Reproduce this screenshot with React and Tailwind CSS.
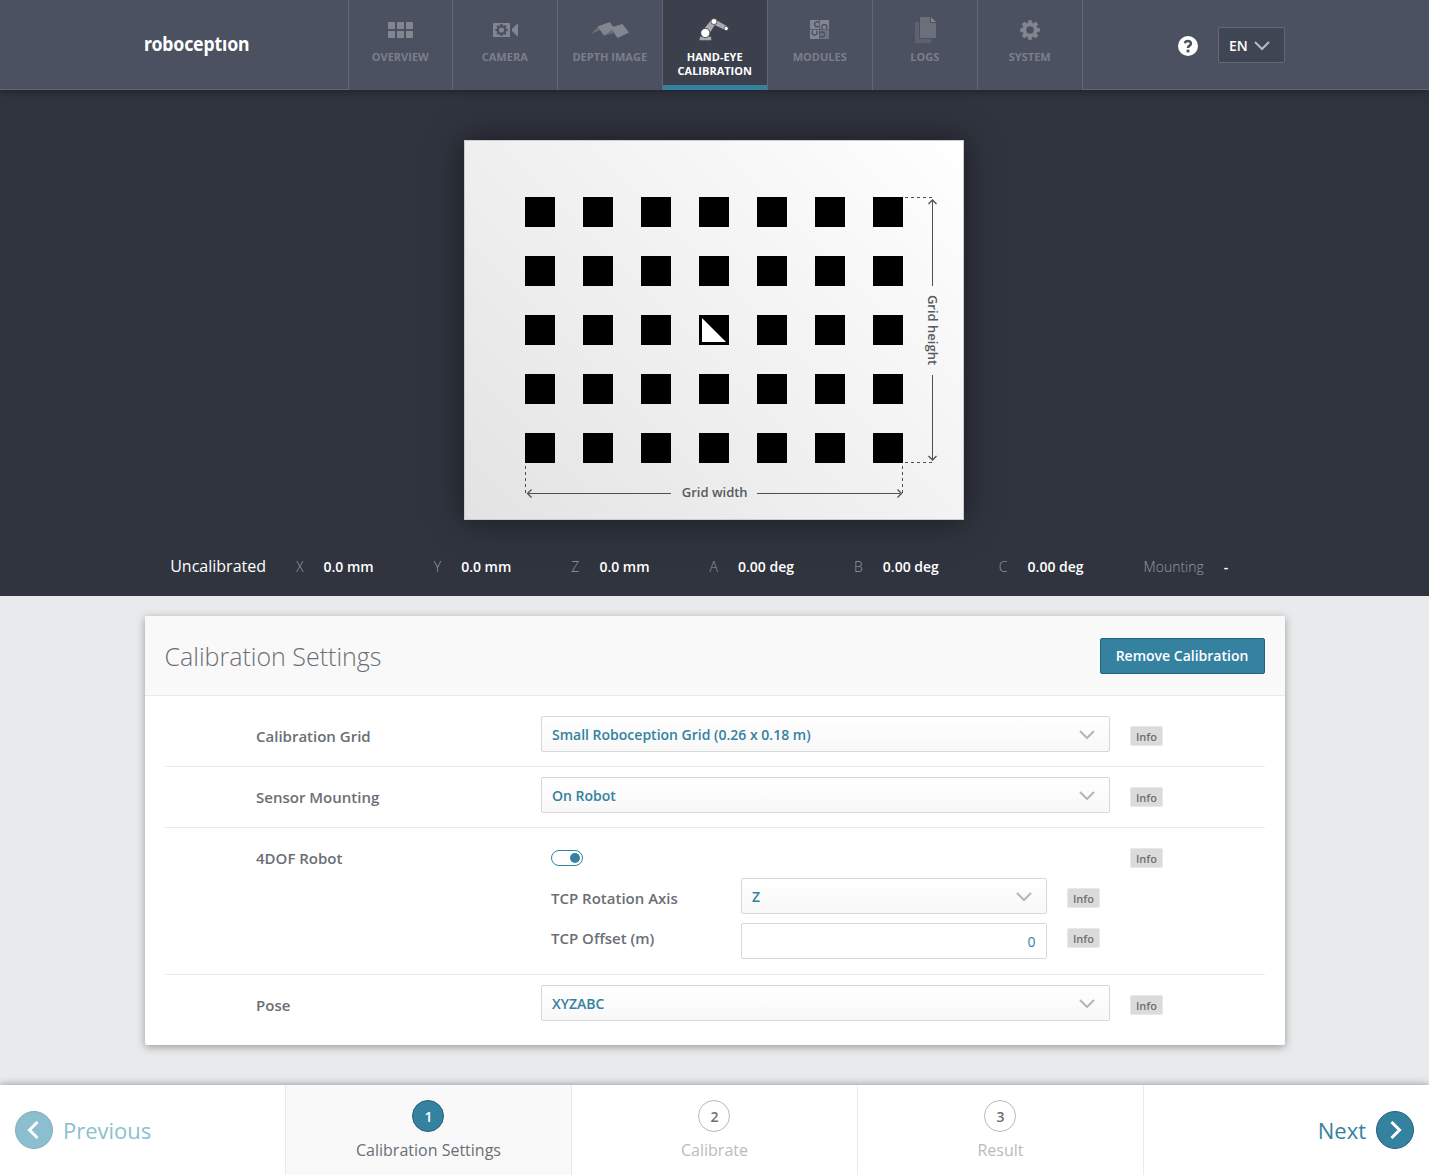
import React from "react";

const GEAR =
  "M8.3 0h3.4l.5 2.6 1.5.6L15.9 1.7l2.4 2.4-1.5 2.2.6 1.5 2.6.5v3.4l-2.6.5-.6 1.5 1.5 2.2-2.4 2.4-2.2-1.5-1.5.6-.5 2.6H8.3l-.5-2.6-1.5-.6-2.2 1.5-2.4-2.4 1.5-2.2-.6-1.5L0 11.7V8.3l2.6-.5.6-1.5L1.7 4.1l2.4-2.4 2.2 1.5 1.5-.6zM10 5.8a4.2 4.2 0 1 0 0 8.4 4.2 4.2 0 0 0 0-8.4z";

const OverviewIcon = () => (
  <svg width="25" height="16" viewBox="0 0 25 16" fill="#828690">
    {[0, 9, 18].map((x) =>
      [0, 9].map((y) => <rect key={`${x}-${y}`} x={x} y={y} width="7" height="7" rx="0.6" />)
    )}
  </svg>
);

const CameraIcon = () => (
  <svg width="25" height="14" viewBox="0 0 25 14" className="ml-px">
    <rect width="17" height="14" rx="0.6" fill="#828690" />
    <path d="M19 6 24 1q1-.6 1 .4v11.2q0 1-1 .4l-5-5z" fill="#828690" />
    <g transform="translate(2.4 0.9) scale(0.61)">
      <path d={GEAR} fill="#4b5160" />
    </g>
  </svg>
);

const DepthIcon = () => (
  <svg width="39" height="17" viewBox="0 0 39 17" className="mt-px ml-px">
    <path d="M0.300 12 7 4.600 9 8z" fill="#6b6f7b" />
    <path d="M13 13.400 20.500 5 23 11z" fill="#6b6f7b" />
    <path d="M6.500 4.500 18.800 0 23 6 13 13.600z" fill="#828690" />
    <path d="M19.600 5.400 31.500 2 38 10.600 26.500 16z" fill="#828690" />
  </svg>
);

const RobotIcon = () => (
  <svg width="30" height="23" viewBox="0 0 30 23" className="mr-0.5 mb-px">
    <path d="M1 18.700h11.200v3.500H.4z" fill="#a9abae" />
    <path d="M4.500 11.500 12 2.200l4.600 3.600-6.400 10z" fill="#a9abae" />
    <path d="M16 1.200 28 8.200l-1.800 3.800L14.600 6.600z" fill="#a9abae" />
    <circle cx="6.300" cy="15" r="4.600" fill="#fff" stroke="#3b404c" strokeWidth="0.900" />
    <circle cx="15" cy="3.500" r="3" fill="#fff" stroke="#3b404c" strokeWidth="0.800" />
    <circle cx="27.200" cy="10.500" r="2.100" fill="#fff" stroke="#3b404c" strokeWidth="0.700" />
  </svg>
);

const ModulesIcon = () => (
  <svg width="19" height="19" viewBox="0 0 19 19" className="mr-px mb-px">
    <path d="M.5 0H9v9.300H0V.5zM9.700 0h8.800l.5.500v8.800H9.700zM0 10h9v9H.5l-.5-.5z" fill="#828690" />
    <path d="M9.700 10H19v8.500l-.5.500H9.700z" fill="#6f7380" />
    <g fill="none" stroke="#4b5160" strokeWidth="1.500">
      <path d="M9 2.700A2.500 2.500 0 1 0 9 6" />
      <path d="M12.700 8.800a2.500 2.500 0 1 1 3.300 0" />
      <path d="M3 10.700a2.500 2.500 0 1 0 3.300 0" />
      <path d="M10.200 12.900a2.500 2.500 0 1 1 0 3.200" />
    </g>
  </svg>
);

const LogsIcon = () => (
  <svg width="21" height="26" viewBox="0 0 21 26" className="ml-px">
    <path d="M0 5h4v17h12v4H0z" fill="#5d626e" />
    <path d="M5 0h10v6h6v15H5z" fill="#6b6f79" />
    <path d="M16 0l5 5h-5z" fill="#828690" />
  </svg>
);

const SystemIcon = () => (
  <svg width="20" height="20" viewBox="0 0 20 20">
    <path
      fill="#828690"
      stroke="#828690"
      strokeWidth="0.4"
      fillRule="evenodd"
      d="M8.500.4Q10-.3 11.500.4l.4 2.500 1.500.6 2.100-1.500q1.700.8 2.500 2.500l-1.500 2.100.6 1.500 2.500.4q.7 1.500 0 3l-2.500.4-.6 1.500 1.500 2.100q-.8 1.700-2.500 2.500l-2.100-1.500-1.500.6-.4 2.500q-1.500.7-3 0l-.4-2.500-1.500-.6L4.500 18Q2.800 17.200 2 15.500l1.500-2.100-.6-1.500-2.500-.4q-.7-1.500 0-3l2.500-.4.6-1.500L2 4.500Q2.800 2.800 4.500 2l2.100 1.500 1.500-.6zM10 6a4 4 0 1 0 0 8 4 4 0 0 0 0-8z"
    />
  </svg>
);

const Chevron = ({ className }) => (
  <svg width="16" height="10" viewBox="0 0 16 10" className={className}>
    <path d="M1 1l7 7 7-7" fill="none" stroke="currentColor" strokeWidth="2" />
  </svg>
);

const NAV = [
  { label: ["OVERVIEW"], Icon: OverviewIcon, width: "w-[104px]" },
  { label: ["CAMERA"], Icon: CameraIcon, width: "w-[105px]" },
  { label: ["DEPTH IMAGE"], Icon: DepthIcon, width: "w-[105px]" },
  { label: ["HAND-EYE", "CALIBRATION"], Icon: RobotIcon, width: "w-[105px]", active: true },
  { label: ["MODULES"], Icon: ModulesIcon, width: "w-[105px]" },
  { label: ["LOGS"], Icon: LogsIcon, width: "w-[105px]" },
  { label: ["SYSTEM"], Icon: SystemIcon, width: "w-[105px]" },
];

function Header() {
  return (
    <header className="relative z-10 flex h-[90px] bg-[#4b5160] shadow-[0_0_10px_rgba(0,0,0,0.5)]">
      <div className="flex w-[348px] border-b border-[#62666f] pt-8 pl-[144px]">
        <span className="h-6 origin-left scale-x-[0.885] font-['Noto_Sans'] text-[20px] leading-6 font-bold tracking-[-0.2px] whitespace-nowrap text-white">
          roboceptıon
        </span>
      </div>
      <nav className="flex">
        {NAV.map(({ label, Icon, width, active }) => (
          <a
            key={label[0]}
            className={`${width} flex flex-col items-center border-l border-[#62666f] ${
              active ? "bg-[#3b404c] text-white shadow-[inset_0_-5px_0_#3581a0]" : "text-[#7b7f8a]"
            }`}
          >
            <span className="mt-[15px] flex h-[30px] items-center justify-center">
              <Icon />
            </span>
            <span className="mt-[5px] pr-[0.5px] text-center text-[11px] leading-[14px] font-bold">
              {label.map((line) => (
                <span key={line} className="block whitespace-nowrap">
                  {line}
                </span>
              ))}
            </span>
          </a>
        ))}
      </nav>
      <div className="flex flex-1 border-b border-l border-[#62666f]">
        <svg width="20" height="20" viewBox="0 0 20 20" className="mt-9 ml-[95px]">
          <circle cx="10" cy="10" r="10" fill="#fff" />
          <path
            d="M6.900 7.200Q7.400 4.900 10 4.900T12.900 7.500Q12.900 9 11.300 9.900 10 10.600 10 12"
            fill="none"
            stroke="#4b5160"
            strokeWidth="2.500"
          />
          <rect x="8.600" y="13.600" width="2.800" height="2.800" fill="#4b5160" />
        </svg>
        <button className="mt-[27px] ml-5 flex h-9 w-[67px] items-center rounded-[2px] border border-[#656973] bg-[#404553] pl-2.5 text-sm font-semibold text-white">
          <span className="pt-0.5">EN</span>
          <Chevron className="mt-0.5 ml-1.5 text-[#b9bbc1]" />
        </button>
      </div>
    </header>
  );
}

function GridPreview() {
  const cells = Array.from({ length: 35 }, (_, i) => i);
  return (
    <div className="relative ml-[464px] h-[380px] w-[500px] border border-[#cbccd0] bg-[linear-gradient(45deg,#e3e3e3,#ffffff)] pt-14 pl-[60px] shadow-[0_0_30px_rgba(0,0,0,0.5)]">
      <div className="grid grid-cols-[repeat(7,30px)] gap-x-7 gap-y-[29px]">
        {cells.map((i) => (
          <div key={i} className="size-[30px] bg-black">
            {i === 17 && (
              <svg width="30" height="30" viewBox="0 0 30 30">
                <path d="M3 3v24h24z" fill="#fff" />
              </svg>
            )}
          </div>
        ))}
      </div>
      <svg
        width="500"
        height="380"
        viewBox="0 0 500 380"
        className="absolute -top-px -left-px"
        fill="none"
        stroke="#4d5157"
      >
        <path d="M441 57.500h28M441 322.500h28M61.500 326v29M438.500 326v29" strokeDasharray="3 3" />
        <path d="M468.500 60v86M468.500 235v85M64 353.500h143M293 353.500h143" />
        <path
          d="M464.500 64l4-4 4 4M464.500 316l4 4 4-4M67.500 349.500l-4 4 4 4M433.500 349.500l4 4-4 4"
          strokeWidth="1.300"
        />
        <text
          x="250.700"
          y="357"
          textAnchor="middle"
          className="fill-[#565a60] stroke-none text-[13px] font-semibold"
        >
          Grid width
        </text>
        <text
          transform="translate(463.500 190) rotate(90)"
          textAnchor="middle"
          className="fill-[#565a60] stroke-none text-[13px] font-semibold"
        >
          Grid height
        </text>
      </svg>
    </div>
  );
}

const POSE = [
  ["X", "0.0 mm"],
  ["Y", "0.0 mm"],
  ["Z", "0.0 mm"],
  ["A", "0.00 deg"],
  ["B", "0.00 deg"],
  ["C", "0.00 deg"],
  ["Mounting", "-"],
];

function Preview() {
  return (
    <section className="h-[506px] bg-[#30343e] pt-[50px]">
      <GridPreview />
      <div className="mt-[34px] flex h-6 items-center pl-[170.200px] whitespace-nowrap">
        <span className="mr-[30px] text-base text-white">Uncalibrated</span>
        {POSE.map(([name, value]) => (
          <span key={name} className="mr-[60px] flex gap-5 pt-0.5 text-sm">
            <span className="font-light text-[#97999e]">{name}</span>
            <span className="font-semibold text-white">{value}</span>
          </span>
        ))}
      </div>
    </section>
  );
}

const Info = ({ className = "" }) => (
  <span
    className={`${className} flex h-5 w-[33px] shrink-0 items-center justify-center rounded-[2px] border border-[#e8e8e8] bg-[#dbdbdb] pt-0.5 pl-px text-[11px] font-semibold text-[#6b6e75]`}
  >
    Info
  </span>
);

const Select = ({ value, className }) => (
  <div
    className={`${className} flex h-9 shrink-0 items-center justify-between rounded-[2px] border border-[#d7d7d9] bg-linear-to-b from-white to-[#f8f8f8] pr-[14px] pl-[10.500px] text-sm font-semibold text-[#3581a0]`}
  >
    <span className="pt-0.5">{value}</span>
    <Chevron className="mt-0.5 text-[#b3b6be]" />
  </div>
);

const Row = ({ label, children, className = "h-[61px] border-b" }) => (
  <div className={`${className} flex border-[#e9eaeb]`}>
    <div className="w-[376px] pt-[19px] pl-[91.500px] text-[15px] leading-[22px] font-semibold text-[#6b6e75]">
      {label}
    </div>
    {children}
  </div>
);

function Settings() {
  return (
    <section className="mx-auto mt-5 h-[429px] w-[1140px] rounded-[2px] bg-white shadow-[0_2px_8px_rgba(0,0,0,0.35)]">
      <div className="flex h-20 items-center justify-between rounded-t-[2px] border-b border-[#e9eaeb] bg-[#f9f9f9] px-5">
        <h1 className="pt-0.5 text-[25px] font-light text-[#6b6e75]">Calibration Settings</h1>
        <button className="h-9 w-[165px] rounded-[2px] border border-[#26627b] bg-[#3581a0] text-sm font-semibold text-white">
          Remove Calibration
        </button>
      </div>
      <div className="px-5 pt-2.5">
        <Row label="Calibration Grid">
          <Select value="Small Roboception Grid (0.26 x 0.18 m)" className="mt-2.5 w-[569px]" />
          <Info className="mt-5 ml-5" />
        </Row>
        <Row label="Sensor Mounting">
          <Select value="On Robot" className="mt-2.5 w-[569px]" />
          <Info className="mt-5 ml-5" />
        </Row>
        <Row label="4DOF Robot" className="h-[147px] border-b">
          <div className="w-[569px] pl-2.5">
            <div className="mt-[22px] flex h-4 w-8 items-center justify-end rounded-full border border-[#3581a0] pr-0.5">
              <span className="size-2.5 rounded-full bg-[#3581a0]" />
            </div>
            <div className="mt-3 flex h-[45px]">
              <span className="w-[190px] pt-[9px] pl-[0.500px] text-[15px] leading-[22px] font-semibold text-[#6b6e75]">
                TCP Rotation Axis
              </span>
              <Select value="Z" className="w-[306px]" />
              <Info className="mt-2.5 ml-5" />
            </div>
            <div className="flex">
              <span className="w-[190px] pt-1 pl-[0.500px] text-[15px] leading-[22px] font-semibold text-[#6b6e75]">
                TCP Offset (m)
              </span>
              <input
                readOnly
                value="0"
                className="h-9 w-[306px] rounded-[2px] border border-[#d7d7d9] bg-white px-2.5 text-right text-sm text-[#3581a0]"
              />
              <Info className="mt-[5px] ml-5" />
            </div>
          </div>
          <Info className="mt-5 ml-5" />
        </Row>
        <Row label="Pose" className="h-[60px]">
          <Select value="XYZABC" className="mt-2.5 w-[569px]" />
          <Info className="mt-5 ml-5" />
        </Row>
      </div>
    </section>
  );
}

const STEPS = ["Calibration Settings", "Calibrate", "Result"];

function Footer() {
  return (
    <footer className="flex h-[90px] w-full bg-white shadow-[0_0_8px_rgba(0,0,0,0.4)]">
      <a className="flex w-[285px] items-center pl-[15px] text-[22px] text-[#8bbfcf]">
        <svg width="38" height="38" viewBox="0 0 38 38" fill="none">
          <circle cx="19" cy="19" r="18.500" fill="#8bbfcf" stroke="#84adb9" />
          <path d="M22.500 11l-8 8 8 8" stroke="#fff" strokeWidth="3" />
        </svg>
        <span className="ml-2.5">Previous</span>
      </a>
      {STEPS.map((step, i) => (
        <div
          key={step}
          className={`flex w-[286px] flex-col items-center border-l border-[#e9eaeb] pt-[15px] ${
            i === 0 ? "bg-[#f9f9f9]" : ""
          }`}
        >
          <span
            className={`mr-px flex size-8 items-center justify-center rounded-full border pt-px pl-px text-sm font-semibold ${
              i === 0
                ? "border-[#26627b] bg-[#3581a0] text-white"
                : "border-[#b9b9bb] bg-white text-[#6b6e75]"
            }`}
          >
            {i + 1}
          </span>
          <span className={`mt-1.5 text-base ${i === 0 ? "text-[#6b6e75]" : "text-[#bbbbbd]"}`}>
            {step}
          </span>
        </div>
      ))}
      <a className="flex flex-1 items-center justify-end border-l border-[#e9eaeb] pr-[15px] text-[22px] text-[#3581a0]">
        <span className="mr-2.5">Next</span>
        <svg width="38" height="38" viewBox="0 0 38 38" fill="none">
          <circle cx="19" cy="19" r="18.500" fill="#3581a0" stroke="#26627b" />
          <path d="M15.500 11l8 8-8 8" stroke="#fff" strokeWidth="3" />
        </svg>
      </a>
    </footer>
  );
}

export default function App() {
  return (
    <div className="flex h-[1175px] w-[1429px] flex-col overflow-hidden bg-[#e9eaec] font-['Open_Sans',sans-serif]">
      <Header />
      <Preview />
      <Settings />
      <div className="flex-1" />
      <Footer />
    </div>
  );
}
